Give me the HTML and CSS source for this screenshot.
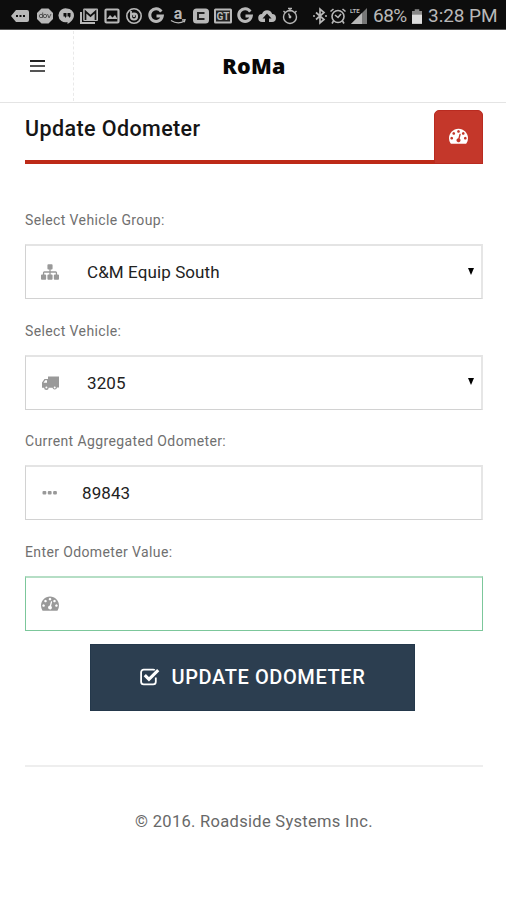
FILE: index.html
```html
<!DOCTYPE html>
<html lang="en">
<head>
<meta charset="utf-8">
<title>RoMa</title>
<link rel="stylesheet" href="styles.css">
</head>
<body>
<svg class="defs" width="0" height="0">
  <symbol id="tach" viewBox="0 0 1792 1792"><path fill-rule="evenodd" d="M384 1152q0-53-37.5-90.5t-90.5-37.5-90.5 37.5-37.5 90.5 37.5 90.5 90.5 37.5 90.5-37.5 37.5-90.5zm192-448q0-53-37.5-90.5t-90.5-37.5-90.5 37.5-37.5 90.5 37.5 90.5 90.5 37.5 90.5-37.5 37.5-90.5zm428 481l101-382q6-26-7.5-48.5t-38.5-29.5-48 6.5-30 39.5l-101 382q-60 5-107 43.5t-63 98.5q-20 77 20 146t117 89 146-20 89-117q16-60-6-117t-72-91zm660-33q0-53-37.5-90.5t-90.5-37.5-90.5 37.5-37.5 90.5 37.5 90.5 90.5 37.5 90.5-37.5 37.5-90.5zm-640-640q0-53-37.5-90.5t-90.5-37.5-90.5 37.5-37.5 90.5 37.5 90.5 90.5 37.5 90.5-37.5 37.5-90.5zm448 192q0-53-37.5-90.5t-90.5-37.5-90.5 37.5-37.5 90.5 37.5 90.5 90.5 37.5 90.5-37.5 37.5-90.5zm320 448q0 261-141 483-19 29-54 29h-1402q-35 0-54-29-141-221-141-483 0-182 71-348t191-286 286-191 348-71 348 71 286 191 191 286 71 348z"/></symbol>
  <symbol id="google" viewBox="0 0 18 18"><path d="M14.3 4.6A6.3 6.3 0 1 0 15.3 9H9.5" fill="none" stroke="currentColor" stroke-width="3"/></symbol>
</svg>

<div class="status">
  <div class="notes">
    <svg viewBox="0 0 18 18"><path fill-rule="evenodd" d="M0 9l5-6h11a2 2 0 0 1 2 2v8a2 2 0 0 1-2 2H5zM5 8v2h2V8zm3.500 0v2h2V8zM12 8v2h2V8z"/></svg>
    <svg viewBox="0 0 18 18"><path d="M5.500 1.500h7L17 6v6l-4.500 4.500h-7L1 12V6z"/><g fill="none" stroke="#555" stroke-width="1"><circle cx="5" cy="9" r="1.700"/><circle cx="9" cy="9" r="1.700"/><path d="M6.700 5.500V11M11.500 7l1.500 4 2-4"/></g></svg>
    <svg viewBox="0 0 18 18"><path fill-rule="evenodd" d="M9 1.500a7 7 0 0 1 7 6.800c0 4-3.500 7.200-6.500 8.700V15A7 7 0 1 1 9 1.500zM5.500 6v3.500h1.500V11L8.500 9.500V6zm4 0v3.500H11V11l1.500-1.500V6z"/></svg>
    <svg viewBox="0 0 18 18"><path d="M1 5v11h14" fill="none" stroke="currentColor" stroke-width="2"/><rect x="3.200" y="1.500" width="14.800" height="12.500" rx="1"/><path d="M5.500 13V4.500l5 4.500 5-4.500V13" fill="none" stroke="#111" stroke-width="1.700"/></svg>
    <svg viewBox="0 0 18 18"><rect x="2.500" y="2.500" width="13" height="13" rx="1" fill="none" stroke="currentColor" stroke-width="2.200"/><path d="M4 12l3-4 2.500 2.500L12 8l2.500 4z"/></svg>
    <svg viewBox="0 0 18 18"><g fill="none" stroke="currentColor"><circle cx="9" cy="9" r="7.200" stroke-width="1.600"/><circle cx="9" cy="9.500" r="3" stroke-width="2.200"/><path d="M6 4v5M9 7v3" stroke-width="1.800"/></g></svg>
    <svg><use href="#google"/></svg>
    <svg class="spill" viewBox="0 0 18 18"><text x="9" y="12" class="glyph amazon">a</text><path d="M2 13.500q7 4.500 13.500.5M13 13l3-.3-.8 2.500" fill="none" stroke="currentColor" stroke-width="1.300"/></svg>
    <svg viewBox="0 0 18 18"><rect x="1" y="1.500" width="16" height="15" rx="3.500"/><path d="M12.500 6H6v6h6.500" fill="none" stroke="#222" stroke-width="1.900"/></svg>
    <svg viewBox="0 0 18 18"><rect x="0" y="1.500" width="18" height="15" rx="1.500"/><rect x="2" y="3.500" width="14" height="11" fill="#222"/><text x="9" y="12.800" class="glyph gt">GT</text></svg>
    <svg><use href="#google"/></svg>
    <svg viewBox="0 0 18 18"><path fill-rule="evenodd" d="M4.500 15a4 4 0 0 1-.5-8 5.300 5.300 0 0 1 10.200 0 4 4 0 0 1-.5 8H11v-3.500h2.500L9 6.500l-4.500 5H7V15z"/></svg>
    <svg viewBox="0 0 18 18"><g fill="none" stroke="currentColor" stroke-width="1.400"><circle cx="9" cy="10" r="6.500"/><path d="M7 1.500h4M9 1.500v3M9 10L7.500 6.500M2.500 4l1.500 1.500M15.500 4L14 5.500"/></g><circle cx="9" cy="10" r="1.400"/></svg>
  </div>
  <div class="system">
    <svg viewBox="0 0 18 18"><path d="M5 5.500l8 7-4 3.500V2l4 3.500-8 7M2 9h2M14 9h2" fill="none" stroke="currentColor" stroke-width="1.700"/></svg>
    <svg viewBox="0 0 18 18"><g fill="none" stroke="currentColor" stroke-width="1.600"><circle cx="9" cy="9.500" r="6"/><path d="M1.500 4.500l3-2.500M16.500 4.500l-3-2.500M6 8l3 2.500L12 7M4.500 14L3 16.500M13.500 14l1.500 2.500"/></g></svg>
    <svg class="signal" viewBox="0 0 18 18"><path d="M1 17L17 1v16z" fill="#777"/><path d="M1 17L12 6v11z"/><text x="0" y="6" class="glyph lte">LTE</text></svg>
    <span class="pct">68%</span>
    <svg class="batt" viewBox="0 0 11 16"><path d="M3 0h5v2h3v14H0V2h3z" fill="#888"/><path d="M0 6h11v10H0z" fill="#ddd"/></svg>
    <span class="time">3:28 PM</span>
  </div>
</div>

<header class="bar">
  <div class="menu"><i></i><i></i><i></i></div>
  <div class="brand">RoMa</div>
</header>

<main>
  <div class="title"><h1>Update Odometer</h1><div class="tab"><svg><use href="#tach"/></svg></div></div>

  <form>
    <label for="group">Select Vehicle Group:</label>
    <div class="field"><svg viewBox="0 0 1792 1792"><path d="M1792 1248v320q0 40-28 68t-68 28h-320q-40 0-68-28t-28-68v-320q0-40 28-68t68-28h96v-192h-512v192h96q40 0 68 28t28 68v320q0 40-28 68t-68 28h-320q-40 0-68-28t-28-68v-320q0-40 28-68t68-28h96v-192h-512v192h96q40 0 68 28t28 68v320q0 40-28 68t-68 28h-320q-40 0-68-28t-28-68v-320q0-40 28-68t68-28h96v-192q0-52 38-90t90-38h512v-192h-96q-40 0-68-28t-28-68v-320q0-40 28-68t68-28h320q40 0 68 28t28 68v320q0 40-28 68t-68 28h-96v192h512q52 0 90 38t38 90v192h96q40 0 68 28t28 68z"/></svg>
      <select id="group"><option>C&amp;M Equip South</option></select><span class="arrow"></span></div>

    <label for="vehicle">Select Vehicle:</label>
    <div class="field"><svg viewBox="0 0 18 18"><path fill-rule="evenodd" d="M7 2.500h11V13.500H16a2.300 2.300 0 0 1-4.500.3H7.700a2.300 2.300 0 0 1-4.600 0H1V8.500L3.500 5H7zM2.500 8.800H6V6.300H4.200z"/><circle cx="5.400" cy="13.500" r="1" fill="#fff"/><circle cx="13.700" cy="13.500" r="1" fill="#fff"/></svg>
      <select id="vehicle"><option>3205</option></select><span class="arrow"></span></div>

    <label for="current">Current Aggregated Odometer:</label>
    <div class="field"><svg viewBox="0 0 18 18"><rect x="1.500" y="7" width="3.800" height="3.400" rx="1"/><rect x="6.800" y="7" width="3.800" height="3.400" rx="1"/><rect x="12.100" y="7" width="3.800" height="3.400" rx="1"/></svg>
      <input id="current" value="89843"></div>

    <label for="value">Enter Odometer Value:</label>
    <div class="field active"><svg><use href="#tach"/></svg><input id="value"></div>

    <button type="button"><svg viewBox="0 0 20 20"><path d="M16 11v4a2.500 2.500 0 0 1-2.500 2.500h-9A2.500 2.500 0 0 1 2 15V6a2.500 2.500 0 0 1 2.500-2.500h9q1 0 1.500.4" fill="none" stroke="currentColor" stroke-width="1.700"/><path d="M5.500 8.700l4 4L18.300 4" fill="none" stroke="currentColor" stroke-width="3"/></svg><span>UPDATE ODOMETER</span></button>
  </form>
  <footer><span>© 2016. Roadside Systems Inc.</span></footer>
</main>
</body>
</html>
```
FILE: styles.css
```css
* { box-sizing: border-box; }
body { margin: 0; width: 506px; height: 900px; overflow: hidden; background: #fff; font-family: Roboto, sans-serif; color: #222; }
svg { fill: currentColor; display: block; flex: none; }
.defs { position: absolute; }

.status { height: 30px; background: #0d0d0d; border-bottom: 1px solid #555; color: #b8b8b8; display: flex; align-items: center; padding: 3px 9px 0 11px; justify-content: space-between; }
.notes { display: flex; gap: 4.27px; }
.notes svg { width: 18px; height: 18px; }
.notes svg:first-child { margin-right: 2.500px; }
.notes .spill { overflow: visible; }
.system { display: flex; align-items: center; }
.system svg { width: 18px; height: 18px; }
.system .signal { margin: 0 5px 0 3px; }
.system .batt { width: 10px; height: 15px; margin: 0 6px 0 4px; }
.pct, .time { font-size: 19px; line-height: 26px; white-space: nowrap; }
.pct { width: 35px; letter-spacing: -0.5px; }
.time { width: 69px; letter-spacing: -0.05px; }
.glyph { font-family: Roboto, sans-serif; font-weight: 700; }
.amazon { font-size: 16px; text-anchor: middle; }
.gt { font-size: 10px; text-anchor: middle; }
.lte { font-size: 6px; }

.bar { height: 73px; border-bottom: 1px solid #e4e4e4; display: flex; align-items: center; }
.menu { width: 74px; height: 70px; border-right: 1px dashed #e9e9e9; display: flex; flex-direction: column; align-items: center; justify-content: center; gap: 3px; padding-left: 1px; }
.menu i { width: 15px; height: 2px; background: #555; }
.menu i:first-child { background: #222; }
.brand { width: 360px; text-align: center; font: 800 21.500px/30px "Open Sans", sans-serif; letter-spacing: .3px; color: #080808; }

main { padding: 7px 23px 0 25px; }
.title { height: 54px; border-bottom: 4px solid #bd2a18; display: flex; justify-content: space-between; }
h1 { margin: 5px 0 0; font-size: 21.500px; line-height: 28px; font-weight: 500; letter-spacing: .4px; color: #151515; }
.tab { width: 49px; height: 54px; border-radius: 5px 5px 0 0; background: #c4372a; border: 1px solid #b92b20; color: #fff; display: flex; align-items: center; justify-content: center; padding-bottom: 4px; }
.tab svg { width: 19px; height: 19px; }

form { display: flex; flex-direction: column; padding-top: 46px; }
label { font-size: 14px; line-height: 20px; height: 20px; margin-bottom: 14px; color: #707070; letter-spacing: .38px; align-self: flex-start; }
.field { height: 55px; margin-bottom: 21.700px; border: 1px solid #d2d2d2; border-top: 2px solid #e4e4e4; border-right: 2px solid #e6e6e6; display: flex; align-items: center; padding: 0 7px 0 15px; color: #999; }
.field svg { width: 18px; height: 18px; }
.field select, .field input { appearance: none; border: 0; outline: 0; background: transparent; flex: 1; min-width: 0; height: 40px; padding: 0; margin-left: 28px; font: 400 17px/40px Roboto, sans-serif; letter-spacing: .1px; color: #222; }
.field input { margin-left: 23px; }
.arrow { border: 3.500px solid transparent; border-top: 7px solid #000; border-bottom: 0; position: relative; top: -1px; }
.field.active { border: 1px solid #7cc79b; border-top: 2px solid #b5dec5; margin-bottom: 13.400px; }
.field.active svg { margin-bottom: 2px; }
button { align-self: center; width: 325px; height: 67px; margin: 0 3px 0 0; padding: 0 1px 2px 0; border: 1px solid #24384b; background: #2c3e50; color: #fff; display: flex; align-items: center; justify-content: center; gap: 12px; font: 500 20px/28px Roboto, sans-serif; letter-spacing: .6px; }
button svg { width: 21px; height: 21px; }
footer { margin-top: 54px; border-top: 2px solid #eee; padding-top: 43px; text-align: center; font-size: 16.500px; line-height: 24px; color: #686868; letter-spacing: .3px; }
```
